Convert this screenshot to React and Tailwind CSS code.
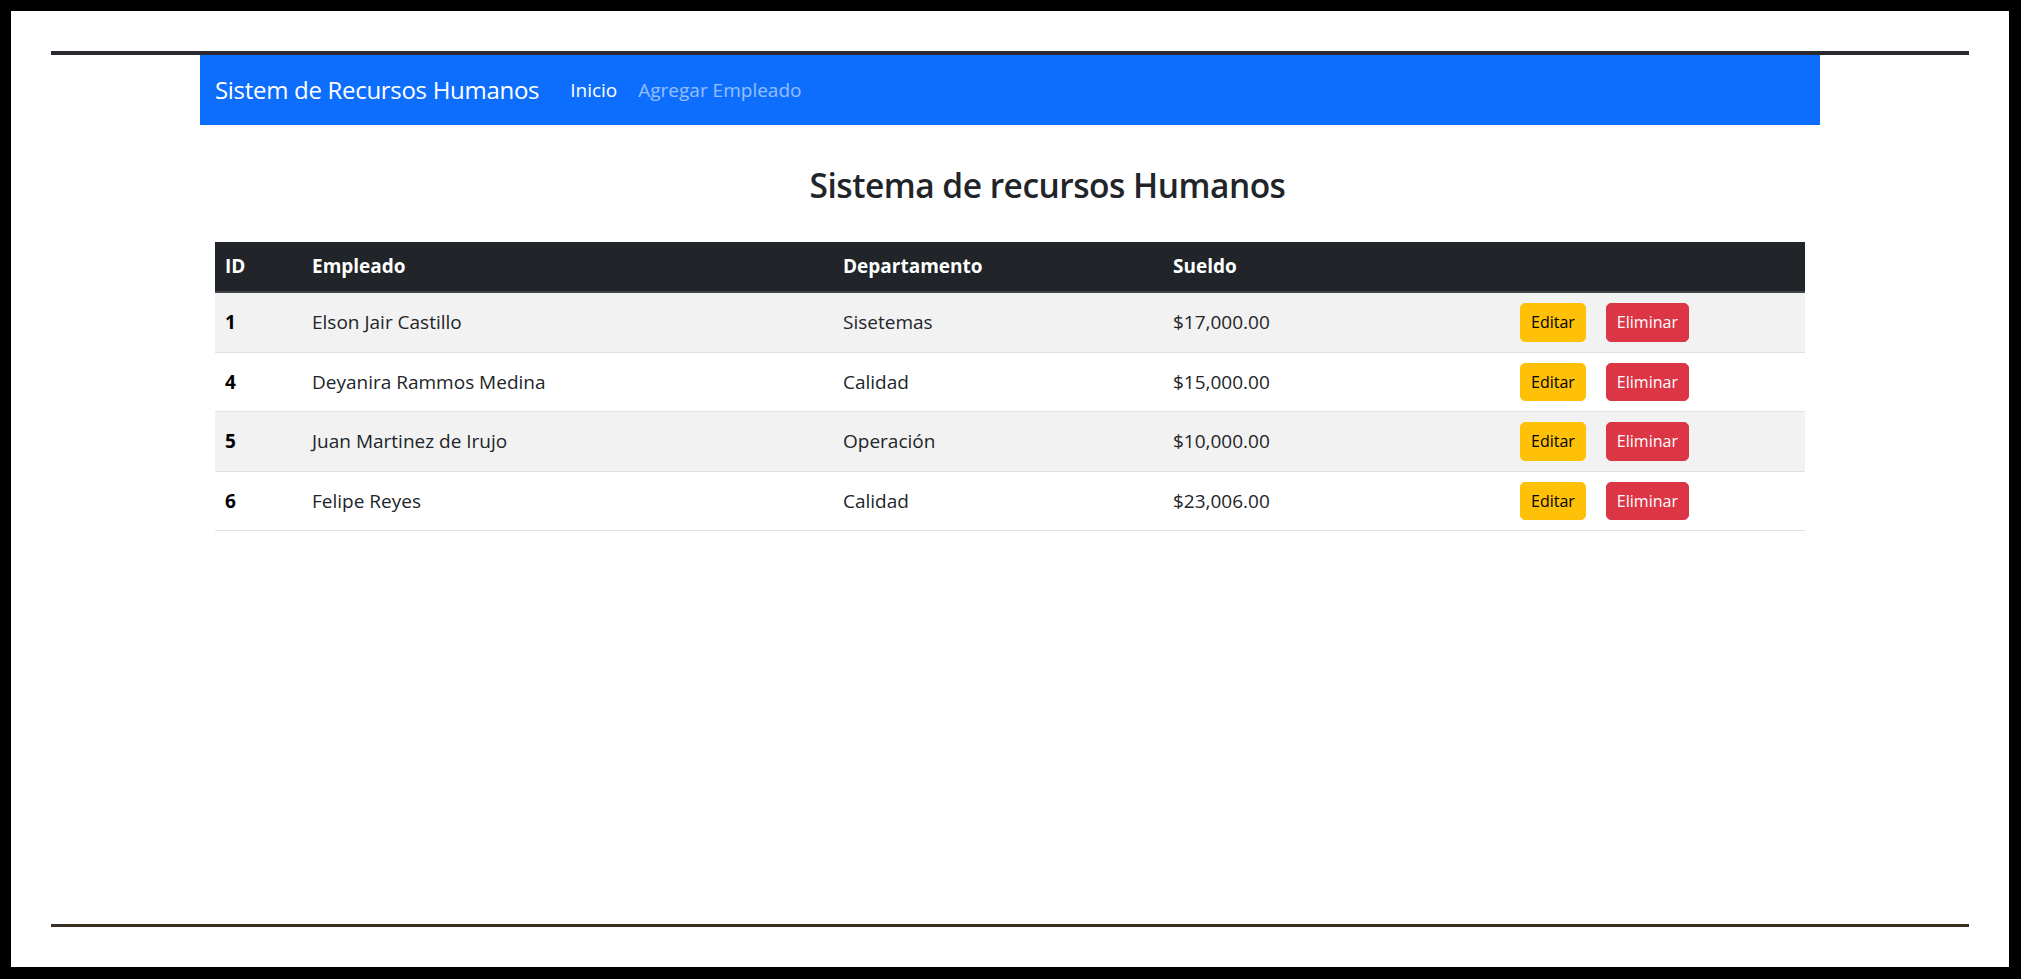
import React from 'react';

const empleados = [
  { id: 1, nombre: 'Elson Jair Castillo', departamento: 'Sisetemas', sueldo: 17000 },
  { id: 4, nombre: 'Deyanira Rammos Medina', departamento: 'Calidad', sueldo: 15000 },
  { id: 5, nombre: 'Juan Martinez de Irujo', departamento: 'Operación', sueldo: 10000 },
  { id: 6, nombre: 'Felipe Reyes', departamento: 'Calidad', sueldo: 23006 },
];

const formatoMoneda = (n) =>
  '$' + n.toLocaleString('en-US', { minimumFractionDigits: 2, maximumFractionDigits: 2 });

const Navbar = () => (
  <nav className="w-[1620px] mx-auto h-[70px] bg-[#0d6efd] px-[15px] flex items-center">
    <a href="#" className="text-[24px] tracking-[-0.3px] text-white mr-[31px]">
      Sistem de Recursos Humanos
    </a>
    <a href="#" className="text-[19px] text-white">Inicio</a>
    <a href="#" className="text-[19px] text-white/55 ml-[21px]">Agregar Empleado</a>
  </nav>
);

const ListadoEmpleados = () => (
  <div className="w-[1620px] mx-auto px-[15px]">
    <h3 className="text-[33.5px] font-semibold tracking-[-0.5px] leading-[42px] text-[#212529] text-center pl-[75px] mt-[39px] mb-[36px]">
      Sistema de recursos Humanos
    </h3>

    <table className="w-full table-fixed border-collapse text-[19px] text-[#212529]">
      <thead>
        <tr className="bg-[#212529] text-white h-[50px]">
          <th className="w-[87px] px-[10px] text-left font-bold border-b-2 border-[#43474b]">ID</th>
          <th className="w-[531px] px-[10px] text-left font-bold border-b-2 border-[#43474b]">Empleado</th>
          <th className="w-[330px] px-[10px] text-left font-bold border-b-2 border-[#43474b]">Departamento</th>
          <th className="w-[347px] px-[10px] text-left font-bold border-b-2 border-[#43474b]">Sueldo</th>
          <th className="w-[295px] px-[10px] border-b-2 border-[#43474b]"></th>
        </tr>
      </thead>
      <tbody>
        {empleados.map((e, i) => (
          <tr key={e.id} className={`border-b border-[#dee2e6] ${i % 2 === 0 ? 'bg-[#f2f2f2]' : 'bg-white'}`}>
            <th className="px-[10px] py-[10px] text-left font-bold text-black">{e.id}</th>
            <td className="px-[10px] py-[10px]">{e.nombre}</td>
            <td className="px-[10px] py-[10px]">{e.departamento}</td>
            <td className="px-[10px] py-[10px]">{formatoMoneda(e.sueldo)}</td>
            <td className="px-[10px] py-[10px]">
              <div className="flex items-center gap-[20px]">
                <button className="bg-[#ffc107] text-black text-[16px] leading-[26.5px] px-[10px] py-[5px] border border-[#ffc107] rounded-[5px]">
                  Editar
                </button>
                <button className="bg-[#dc3545] text-white text-[16px] leading-[26.5px] px-[10px] py-[5px] border border-[#dc3545] rounded-[5px]">
                  Eliminar
                </button>
              </div>
            </td>
          </tr>
        ))}
      </tbody>
    </table>
  </div>
);

export default function App() {
  return (
    <div
      className="w-full h-[979px] bg-black pt-[11px] pl-[11px] pr-[12px] pb-[12px]"
      style={{ fontFamily: '"Open Sans", "Noto Sans", sans-serif' }}
    >
      <div className="h-full bg-white px-[40px] flex flex-col">
        <div className="mt-[40px] h-[4px] bg-[#2a2a30]" />
        <Navbar />
        <div className="flex-1">
          <ListadoEmpleados />
        </div>
        <div className="mb-[40px] h-[3px] bg-[#3a2c1e]" />
      </div>
    </div>
  );
}
